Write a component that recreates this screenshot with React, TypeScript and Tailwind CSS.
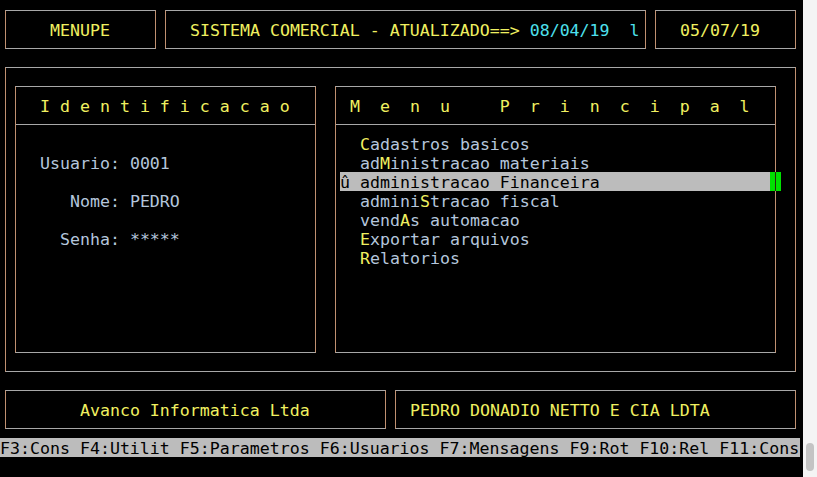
import React from "react";

const Y = "text-[#f0f060]";
const B = "text-[#b4c6dc]";
const boxCls = "box-border border border-y-[#a8a8a8] border-x-[#c09070]";

function Item({ text, hot }: { text: string; hot: number }) {
  return (
    <div className={`h-[19px] pt-[1px] pl-[4px] whitespace-pre ${B}`}>
      {"  " + text.slice(0, hot)}
      <span className={Y}>{text[hot]}</span>
      {text.slice(hot + 1)}
    </div>
  );
}

export default function App() {
  return (
    <div
      className="w-[817px] h-[477px] bg-black flex overflow-hidden text-[16.6px] leading-[19px]"
      style={{ fontFamily: '"DejaVu Sans Mono", "Liberation Mono", monospace' }}
    >
      <div className="w-[803px] shrink-0 flex flex-col">
        {/* top boxes */}
        <div className="flex mt-[10px] ml-[5px] gap-[9px] h-[39px]">
          <div className={`${boxCls} w-[151px] h-full flex items-center pt-[2px] pl-[4px] whitespace-pre ${Y}`}>
            {"    MENUPE"}
          </div>
          <div className={`${boxCls} w-[481px] h-full flex items-center pt-[2px] pl-[4px] whitespace-pre ${Y}`}>
            <span>{"  SISTEMA COMERCIAL - ATUALIZADO==> "}</span>
            <span className="text-[#4ee0ee]">08/04/19</span>
            <span>{"  "}</span>
            <span className="text-[#4ee0ee]">l</span>
          </div>
          <div className={`${boxCls} w-[141px] h-full flex items-center pt-[2px] pl-[4px] whitespace-pre ${Y}`}>
            {"  05/07/19"}
          </div>
        </div>

        {/* main box */}
        <div className={`${boxCls} mt-[18px] ml-[5px] w-[791px] h-[305px] flex items-start`}>
          <div className={`${boxCls} mt-[18px] ml-[9px] w-[301px] h-[267px] flex flex-col shrink-0`}>
            <div className="h-[38px] border-b border-b-[#a8a8a8] flex items-center pt-[2px] pl-[4px] whitespace-pre">
              <span className={Y}>{"  I d e n t i f i c a c a o"}</span>
            </div>
            <div className={`pt-[28px] pl-[4px] whitespace-pre ${B}`}>
              <div className="h-[19px] pt-[1px]">{"  Usuario: 0001"}</div>
              <div className="h-[19px] pt-[1px] mt-[19px]">{"     Nome: PEDRO"}</div>
              <div className="h-[19px] pt-[1px] mt-[19px]">{"    Senha: *****"}</div>
            </div>
          </div>

          <div className={`${boxCls} mt-[18px] ml-[19px] w-[441px] h-[267px] flex flex-col shrink-0`}>
            <div className="h-[38px] border-b border-b-[#a8a8a8] flex items-center pt-[2px] pl-[4px] whitespace-pre">
              <span className={Y}>{" M  e  n  u     P  r  i  n  c  i  p  a  l"}</span>
            </div>
            <div className="pt-[9px] flex flex-col">
              <Item text="Cadastros basicos" hot={0} />
              <Item text="adMinistracao materiais" hot={2} />
              <div className="h-[19px] pl-[4px] flex">
                <div className="w-[430px] shrink-0 pt-[1px] bg-[#bcbcbc] text-black whitespace-pre">
                  {"û administracao Financeira"}
                </div>
                <div className="w-[5px] shrink-0 bg-[#00e000]" />
                <div className="w-[1px] shrink-0 bg-[#2a2410]" />
                <div className="w-[5px] shrink-0 bg-[#00e000]" />
              </div>
              <Item text="adminiStracao fiscal" hot={6} />
              <Item text="vendAs automacao" hot={4} />
              <Item text="Exportar arquivos" hot={0} />
              <Item text="Relatorios" hot={0} />
            </div>
          </div>
        </div>

        {/* bottom boxes */}
        <div className="flex mt-[18px] ml-[5px] gap-[9px] h-[39px]">
          <div className={`${boxCls} w-[381px] h-full flex items-center pt-[2px] pl-[4px] whitespace-pre ${Y}`}>
            {"       Avanco Informatica Ltda"}
          </div>
          <div className={`${boxCls} w-[401px] h-full flex items-center pt-[2px] pl-[4px] whitespace-pre ${Y}`}>
            {" PEDRO DONADIO NETTO E CIA LDTA"}
          </div>
        </div>

        {/* status bar */}
        <div className="mt-[9px] h-[19px] pt-[1px] w-[800px] bg-[#bcbcbc] text-black whitespace-pre">
          {"F3:Cons F4:Utilit F5:Parametros F6:Usuarios F7:Mensagens F9:Rot F10:Rel F11:Cons"}
        </div>
      </div>

      {/* scrollbar */}
      <div className="w-[14px] h-full bg-[#f4f4f4] flex flex-col justify-end items-start shrink-0">
        <div className="ml-[3px] mb-[6px] w-[8px] h-[28px] rounded-full bg-[#c4c4c4]" />
      </div>
    </div>
  );
}
